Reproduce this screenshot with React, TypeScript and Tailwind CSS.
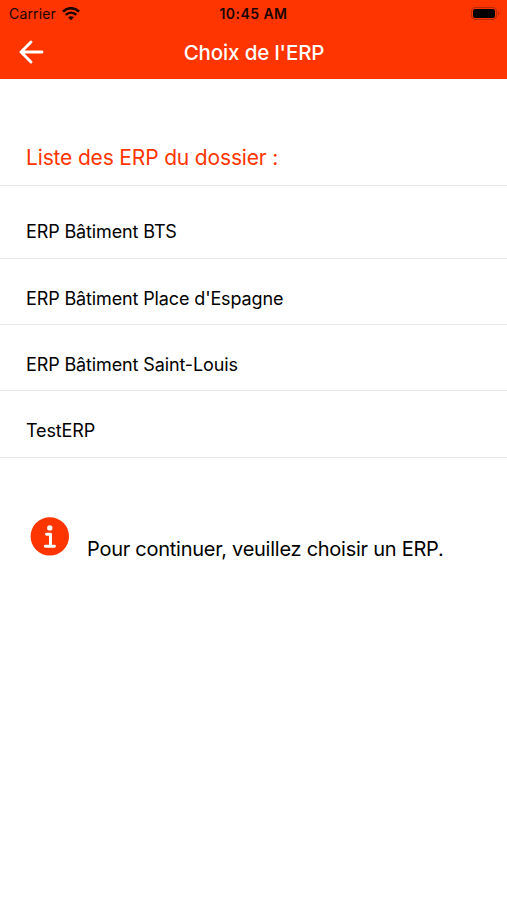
import React from 'react';

const ERP_LIST = [
  { label: 'ERP Bâtiment BTS', row: 'h-[73px] pt-[19px]' },
  { label: "ERP Bâtiment Place d'Espagne", row: 'h-[66px] pt-[13px]' },
  { label: 'ERP Bâtiment Saint-Louis', row: 'h-[66px] pt-[13px]' },
  { label: 'TestERP', row: 'h-[67px] pt-[12px]' },
];

const WifiIcon = () => (
  <svg width="18" height="14" viewBox="0 0 18 14" fill="none" stroke="#1b0500" strokeWidth="2.5">
    <path d="M.9 4.6C5.5 0 12.5 0 17.1 4.6" />
    <path d="M3.7 7.9c3.1-2.9 7.5-2.9 10.6 0" />
    <path d="M9 13.3 6.1 10.3c1.6-1.5 4.2-1.5 5.8 0z" fill="#1b0500" stroke="none" />
  </svg>
);

const BatteryIcon = () => (
  <svg width="29" height="13" viewBox="0 0 29 13">
    <rect x="0.5" y="0.5" width="25" height="12" rx="3.5" fill="none" stroke="#b92800" />
    <rect x="2" y="2" width="22" height="9" rx="2" fill="#000" />
    <path d="M27 4.5c1.8.7 1.8 3.3 0 4z" fill="#b92800" />
  </svg>
);

const StatusBar = () => (
  <div className="grid h-[27px] grid-cols-3 items-center text-[14px] text-[#1b0500]">
    <div className="flex items-center gap-[6px] pl-[9px]">
      <span className="tracking-[0.15px]">Carrier</span>
      <WifiIcon />
    </div>
    <span className="text-center font-semibold tracking-[0.45px]">10:45 AM</span>
    <div className="flex justify-end pr-[7px]">
      <BatteryIcon />
    </div>
  </div>
);

export default function App() {
  return (
    <div className="min-h-[900px] w-full bg-white font-['Inter',sans-serif] text-black">
      <header className="h-[79px] bg-[#ff3500]">
        <StatusBar />
        <div className="grid h-[50px] grid-cols-[80px_1fr_80px] items-center">
          <button className="pl-[19px]">
            <svg
              width="25"
              height="24"
              viewBox="0 0 25 24"
              fill="none"
              stroke="#fff"
              strokeWidth="2.9"
              strokeLinecap="round"
              strokeLinejoin="round"
            >
              <path d="M12 2 2 12l10 10M2 12h21" />
            </svg>
          </button>
          <h1 className="pt-[2px] pl-px text-center text-[20.5px] font-medium tracking-[-0.12px] text-white">
            Choix de l'ERP
          </h1>
        </div>
      </header>

      <h2 className="flex h-[107px] items-end border-b border-[#e8e8e8] px-[26px] pb-[12px] text-[21px] leading-[30px] tracking-[-0.16px] text-[#ff3500]">
        Liste des ERP du dossier :
      </h2>

      <ul>
        {ERP_LIST.map((erp) => (
          <li
            key={erp.label}
            className={`flex items-center border-b border-[#e8e8e8] px-[26px] text-[18px] tracking-[-0.13px] ${erp.row}`}
          >
            {erp.label}
          </li>
        ))}
      </ul>

      <div className="flex items-start pt-[59px] pl-[30px]">
        <svg width="40" height="39" viewBox="0 0 40 39">
          <circle cx="19.8" cy="19.4" r="19.2" fill="#ff3500" />
          <circle cx="19.8" cy="10.9" r="2.7" fill="#fff" />
          <path
            d="M16.5 17.2h4v12M15.3 29.2h9.2"
            fill="none"
            stroke="#fff"
            strokeWidth="2.9"
            strokeLinecap="round"
            strokeLinejoin="round"
          />
        </svg>
        <p className="pt-[18px] pl-[17px] text-[20px] leading-[28px] tracking-[-0.26px]">
          Pour continuer, veuillez choisir un ERP.
        </p>
      </div>
    </div>
  );
}
